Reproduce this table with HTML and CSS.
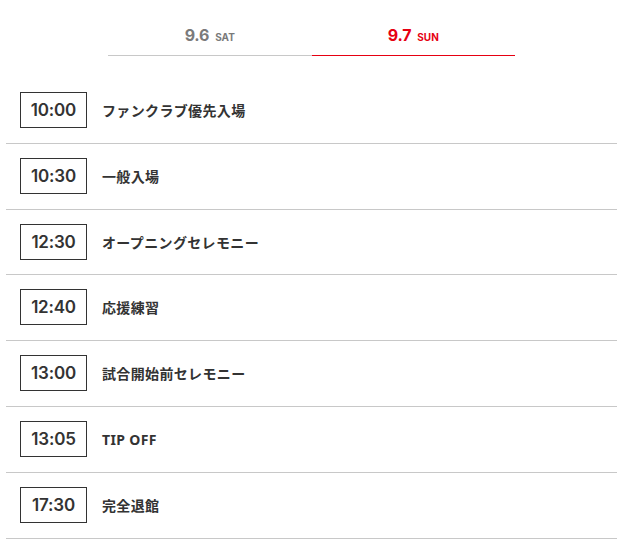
FILE: index.html
```html
<!DOCTYPE html>
<html lang="ja">
<head>
<meta charset="utf-8">
<link rel="stylesheet" href="styles.css">
</head>
<body>
<div class="wrap">
  <div class="tabs">
    <div class="tab"><span class="date">9.6</span><span class="dow">SAT</span></div>
    <div class="tab active"><span class="date">9.7</span><span class="dow">SUN</span></div>
  </div>
  <ul class="schedule">
    <li class="row"><span class="time">10:00</span><span class="label">ファンクラブ優先入場</span></li>
    <li class="row"><span class="time">10:30</span><span class="label">一般入場</span></li>
    <li class="row"><span class="time">12:30</span><span class="label">オープニングセレモニー</span></li>
    <li class="row"><span class="time">12:40</span><span class="label">応援練習</span></li>
    <li class="row"><span class="time">13:00</span><span class="label">試合開始前セレモニー</span></li>
    <li class="row"><span class="time">13:05</span><span class="label">TIP OFF</span></li>
    <li class="row"><span class="time">17:30</span><span class="label">完全退館</span></li>
  </ul>
</div>
</body>
</html>
```
FILE: styles.css
```css
html, body {
  margin: 0;
  padding: 0;
  background: #fff;
}
body {
  font-family: "Noto Sans", "Noto Sans CJK JP", sans-serif;
  color: #333;
}
.wrap {
  width: 611px;
  margin-left: 6px;
}
.tabs {
  width: 407px;
  margin: 0 auto;
  display: flex;
  padding-top: 25px;
}
.tab {
  flex: 1;
  display: flex;
  justify-content: center;
  align-items: baseline;
  gap: 6px;
  height: 30px;
  border-bottom: 1px solid #c8c8c8;
  color: #7a7a7a;
  font-family: "Inter", "Liberation Sans", sans-serif;
  font-weight: 700;
}
.tab.active {
  color: #e60012;
  border-bottom-color: #e60012;
}
.date {
  font-size: 16px;
  letter-spacing: -0.2px;
}
.dow {
  font-size: 10px;
}
.schedule {
  list-style: none;
  margin: 22px 0 0;
  padding: 0;
}
.row {
  display: flex;
  align-items: center;
  padding: 14px 0 14.84px 14px;
  border-bottom: 1px solid #c8c8c8;
}
.time {
  box-sizing: border-box;
  width: 67px;
  height: 36px;
  border: 1px solid #333;
  display: flex;
  align-items: center;
  justify-content: center;
  font-family: "Inter", "Liberation Sans", sans-serif;
  font-weight: 600;
  font-size: 17px;
  letter-spacing: -0.2px;
  color: #333;
}
.label {
  margin-left: 15px;
  font-size: 14px;
  font-weight: 700;
  letter-spacing: 0.35px;
  color: #333;
}
```
